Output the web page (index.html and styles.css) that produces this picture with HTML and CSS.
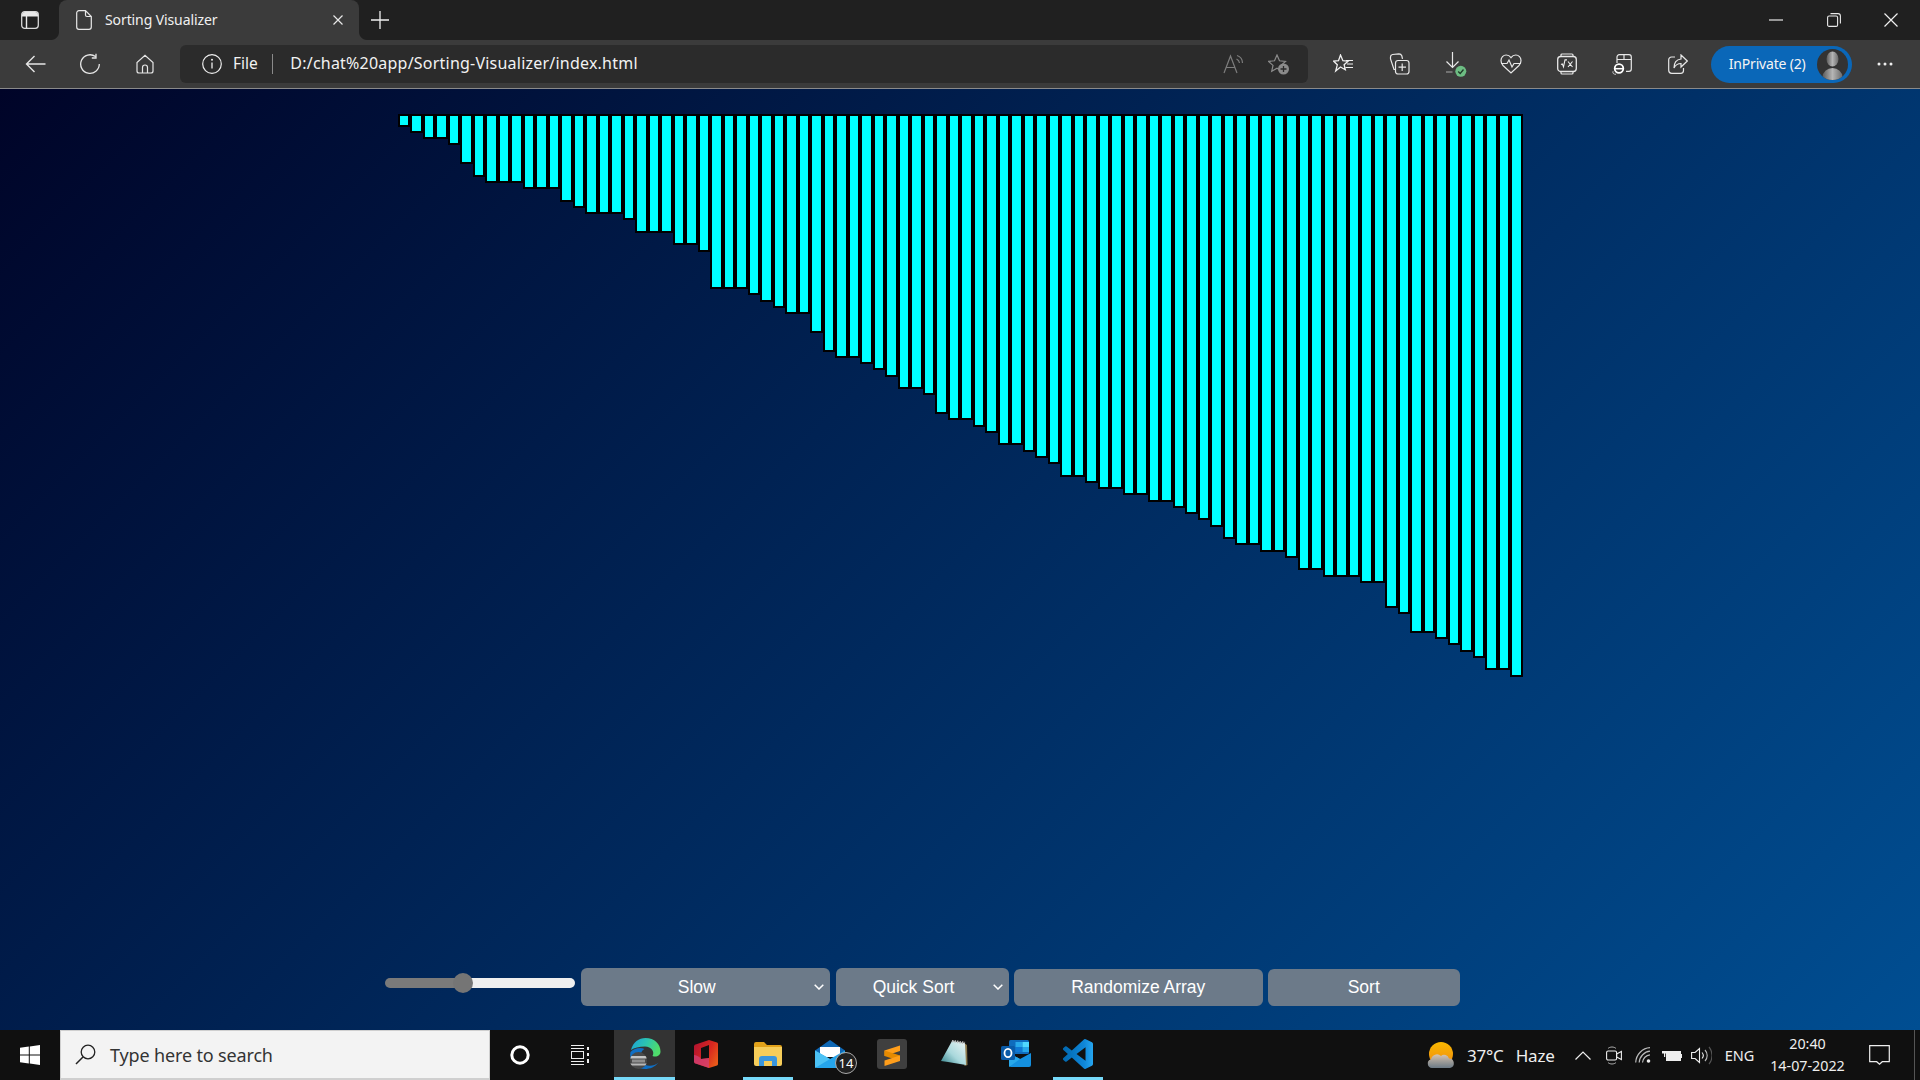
FILE: index.html
```html
<!DOCTYPE html>
<html lang="en">
<head>
<meta charset="utf-8">
<title>Sorting Visualizer</title>
<link rel="stylesheet" href="styles.css">
</head>
<body>
<div class="window">
  <header class="tabstrip">
    <div class="tab-actions">
      <svg class="ic" width="18" height="18" viewBox="0 0 18 18"><rect x=".7" y=".7" width="16.6" height="16.6" rx="3" fill="none" stroke="#d8d8d8" stroke-width="1.3"/><path d="M1 4a3 3 0 0 1 3-3h10a3 3 0 0 1 3 3v1.500H6.200V17H4.800V5.500H1z" fill="#e8e8e8"/></svg>
    </div>
    <div class="tab">
      <svg class="ic" width="16" height="20" viewBox="0 0 16 20"><path d="M3 .7h6.500L15.300 6.500V17a2.300 2.300 0 0 1-2.300 2.300H3A2.300 2.300 0 0 1 .7 17V3A2.300 2.300 0 0 1 3 .7zM9.500 .7V5a1.500 1.500 0 0 0 1.500 1.500h4.300" fill="none" stroke="#e8e8e8" stroke-width="1.200"/></svg>
      <span class="tab-title">Sorting Visualizer</span>
      <svg class="ic tab-close" width="12" height="12" viewBox="0 0 12 12"><path d="M1.500 1.500l9 9M10.500 1.500l-9 9" stroke="#e8e8e8" stroke-width="1.200"/></svg>
    </div>
    <div class="new-tab">
      <svg class="ic" width="18" height="18" viewBox="0 0 18 18"><path d="M9 0v18M0 9h18" stroke="#f0f0f0" stroke-width="1.300"/></svg>
    </div>
    <div class="win-controls">
      <div class="win-btn"><svg class="ic" width="14" height="2" viewBox="0 0 14 2"><path d="M0 1h14" stroke="#e8e8e8" stroke-width="1.200"/></svg></div>
      <div class="win-btn"><svg class="ic" width="14" height="14" viewBox="0 0 14 14"><rect x=".6" y="3" width="10" height="10.400" rx="1.500" fill="none" stroke="#e8e8e8" stroke-width="1.100"/><path d="M3.500 .6h7.500a2.400 2.400 0 0 1 2.400 2.400v7.500" fill="none" stroke="#e8e8e8" stroke-width="1.100"/></svg></div>
      <div class="win-btn"><svg class="ic" width="14" height="14" viewBox="0 0 14 14"><path d="M.5 .5l13 13M13.500 .5l-13 13" stroke="#f0f0f0" stroke-width="1.200"/></svg></div>
    </div>
  </header>

  <nav class="toolbar">
    <div class="nav-cell"><svg class="ic" width="21" height="18" viewBox="0 0 21 18"><path d="M20.500 9H1.500M9.500 1L1.500 9l8 8" fill="none" stroke="#e6e6e6" stroke-width="1.400"/></svg></div>
    <div class="nav-cell"><svg class="ic" width="22" height="22" viewBox="0 0 22 22"><path d="M16.500 3.600A9.300 9.300 0 1 0 20.300 11M17 .8v4.200h-4.200" fill="none" stroke="#e6e6e6" stroke-width="1.300"/></svg></div>
    <div class="nav-cell"><svg class="ic" width="20" height="20" viewBox="0 0 20 20"><path d="M7.500 19V13.500a2.500 2.500 0 0 1 5 0V19M4 19h12a2 2 0 0 0 2-2V8.500L10 1.200 2 8.500V17a2 2 0 0 0 2 2z" fill="none" stroke="#e6e6e6" stroke-width="1.200"/></svg></div>

    <div class="address">
      <svg class="ic" width="20" height="20" viewBox="0 0 20 20"><circle cx="10" cy="10" r="9.300" fill="none" stroke="#eee" stroke-width="1.200"/><path d="M10 8.500v6" stroke="#eee" stroke-width="1.300"/><circle cx="10" cy="5.800" r="1" fill="#eee"/></svg>
      <span class="addr-file">File</span>
      <span class="addr-sep"></span>
      <span class="addr-url">D:/chat%20app/Sorting-Visualizer/index.html</span>
      <div class="addr-icons">
        <div class="addr-cell"><svg class="ic" width="22" height="20" viewBox="0 0 22 20"><path d="M1 19L7.500 2 14 19M3.300 13.500h8.400" fill="none" stroke="#7d7d7d" stroke-width="1.200"/><path d="M14 1.500a8 8 0 0 1 5.500 7.500M13.500 5a5 5 0 0 1 3 4" fill="none" stroke="#7d7d7d" stroke-width="1.200"/></svg></div>
        <div class="addr-cell"><svg class="ic" width="22" height="21" viewBox="0 0 22 21"><path d="M9 1l2.500 5.800 6 .6-4.500 4 1.300 5.900L9 14.300l-5.300 3 1.300-5.900-4.500-4 6-.6z" fill="none" stroke="#8b8b8b" stroke-width="1.200"/><circle cx="15.500" cy="15" r="5.500" fill="#8b8b8b"/><path d="M15.500 12v6M12.500 15h6" stroke="#2b2b2b" stroke-width="1.300"/></svg></div>
      </div>
    </div>

    <div class="tool-icons">
      <div class="tool-cell"><svg class="ic" width="21" height="20" viewBox="0 0 21 20"><path d="M7.500 1l2.400 5.700 5.100.5-3.900 3.500 1.200 5-4.800-2.700-4.800 4 1.600-6.200L.7 7.200l4.800-.5z" fill="none" stroke="#f0f0f0" stroke-width="1.300"/><path d="M13 6.500h7M14 10h6M12.500 13.500h7.500" stroke="#f0f0f0" stroke-width="1.200"/></svg></div>
      <div class="tool-cell"><svg class="ic" width="21" height="22" viewBox="0 0 21 22"><path d="M6.500 16.500H5L1.500 6V4a2.500 2.500 0 0 1 2-2.500L10 .8c1.500 0 2.300.7 2.800 2l.7 3" fill="none" stroke="#e8e8e8" stroke-width="1.200"/><rect x="6.500" y="7.500" width="13.500" height="13.500" rx="2.500" fill="none" stroke="#e8e8e8" stroke-width="1.200"/><path d="M13.200 10.500v7.500M9.500 14.200H17" stroke="#e8e8e8" stroke-width="1.200"/></svg></div>
      <div class="tool-cell tool-download"><svg class="ic" width="23" height="25" viewBox="0 0 23 25"><path d="M7.500 0v15M1.500 9.500l6 6 6-6" fill="none" stroke="#e8e8e8" stroke-width="1.200"/><path d="M1 20h6.500" stroke="#999" stroke-width="1.200"/><circle cx="15.800" cy="19.300" r="5.500" fill="#6dbd83"/><path d="M13.200 19.500l2 2 3.300-4" fill="none" stroke="#1f3a28" stroke-width="1.300"/></svg></div>
      <div class="tool-cell"><svg class="ic" width="22" height="20" viewBox="0 0 22 20"><path d="M3 11.500C1.500 10 1 8.500 1 6.500 1 3.500 3.300 1 6.200 1 8 1 9.800 2 11 3.700 12.200 2 14 1 15.800 1 18.700 1 21 3.500 21 6.500c0 2-.5 3.500-2 5L11 19z" fill="none" stroke="#e8e8e8" stroke-width="1.200"/><path d="M1 9.500h6l2-3.500 3 7 2-3.500h7" fill="none" stroke="#e8e8e8" stroke-width="1.200"/></svg></div>
      <div class="tool-cell"><svg class="ic" width="20" height="22" viewBox="0 0 20 22"><rect x=".7" y="3.500" width="18.600" height="15" rx="3" fill="none" stroke="#e8e8e8" stroke-width="1.300"/><path d="M4 3.500V2a1 1 0 0 1 1-1h10a1 1 0 0 1 1 1v1.500M4 18.500V20a1 1 0 0 0 1 1h10a1 1 0 0 0 1-1v-1.500" fill="none" stroke="#e8e8e8" stroke-width="1.200"/><path d="M4 11.500l1.300-.6 1.200 3 1.500-7h2M11 8.500l4.500 5.500M15.500 8.500L11 14" fill="none" stroke="#f0f0f0" stroke-width="1.100"/></svg></div>
      <div class="tool-cell"><svg class="ic" width="20" height="21" viewBox="0 0 20 21"><path d="M5 9V3a2.300 2.300 0 0 1 2.300-2.300H17A2.300 2.300 0 0 1 19.300 3v12a2.300 2.300 0 0 1-2.300 2.300h-3M5.500 5.500h13.500M12 1v4.500" fill="none" stroke="#e8e8e8" stroke-width="1.200"/><circle cx="7" cy="14.500" r="4.300" fill="none" stroke="#fff" stroke-width="1.800"/><path d="M3 14.700h8" stroke="#fff" stroke-width="1.500"/><path d="M4 20.300c-2.500 0-3.500-1-3-3" fill="none" stroke="#ccc" stroke-width="1"/></svg></div>
      <div class="tool-cell"><svg class="ic" width="20" height="20" viewBox="0 0 20 20"><path d="M7 3H3.500A2.800 2.800 0 0 0 .7 5.800v10.500a3 3 0 0 0 3 3h9a2.800 2.800 0 0 0 2.800-2.800V14" fill="none" stroke="#e8e8e8" stroke-width="1.200"/><path d="M13 1l6.300 6L13 13V9.500C9.500 9.500 7.500 11 6 14c0-5 2.500-8.500 7-9z" fill="none" stroke="#e8e8e8" stroke-width="1.200"/></svg></div>
    </div>

    <div class="inprivate">
      <span class="inprivate-label">InPrivate (2)</span>
      <svg class="avatar" width="31" height="31" viewBox="0 0 31 31"><defs><linearGradient id="av" x1="0" x2="1"><stop offset="0" stop-color="#5a5a5a"/><stop offset=".5" stop-color="#b5b5b5"/><stop offset="1" stop-color="#6a6a6a"/></linearGradient><clipPath id="avc"><circle cx="15.500" cy="15.500" r="15.500"/></clipPath></defs><circle cx="15.500" cy="15.500" r="15.500" fill="#333"/><g clip-path="url(#avc)"><ellipse cx="15.500" cy="10" rx="6" ry="7.500" fill="url(#av)"/><ellipse cx="15.500" cy="28" rx="10" ry="9" fill="url(#av)"/></g></svg>
    </div>
    <div class="more"><svg class="ic" width="16" height="4" viewBox="0 0 16 4"><circle cx="2" cy="2" r="1.500" fill="#eee"/><circle cx="8" cy="2" r="1.500" fill="#eee"/><circle cx="14" cy="2" r="1.500" fill="#eee"/></svg></div>
  </nav>

  <main class="page">
    <div class="bars">
      <div class="bar" style="height:13px"></div><div class="bar" style="height:19px"></div><div class="bar" style="height:25px"></div><div class="bar" style="height:25px"></div><div class="bar" style="height:31px"></div><div class="bar" style="height:50px"></div><div class="bar" style="height:63px"></div><div class="bar" style="height:69px"></div><div class="bar" style="height:69px"></div><div class="bar" style="height:69px"></div>
      <div class="bar" style="height:75px"></div><div class="bar" style="height:75px"></div><div class="bar" style="height:75px"></div><div class="bar" style="height:88px"></div><div class="bar" style="height:94px"></div><div class="bar" style="height:100px"></div><div class="bar" style="height:100px"></div><div class="bar" style="height:100px"></div><div class="bar" style="height:106px"></div><div class="bar" style="height:119px"></div>
      <div class="bar" style="height:119px"></div><div class="bar" style="height:119px"></div><div class="bar" style="height:131px"></div><div class="bar" style="height:131px"></div><div class="bar" style="height:138px"></div><div class="bar" style="height:175px"></div><div class="bar" style="height:175px"></div><div class="bar" style="height:175px"></div><div class="bar" style="height:181px"></div><div class="bar" style="height:188px"></div>
      <div class="bar" style="height:194px"></div><div class="bar" style="height:200px"></div><div class="bar" style="height:200px"></div><div class="bar" style="height:219px"></div><div class="bar" style="height:238px"></div><div class="bar" style="height:244px"></div><div class="bar" style="height:244px"></div><div class="bar" style="height:250px"></div><div class="bar" style="height:256px"></div><div class="bar" style="height:263px"></div>
      <div class="bar" style="height:275px"></div><div class="bar" style="height:275px"></div><div class="bar" style="height:281px"></div><div class="bar" style="height:300px"></div><div class="bar" style="height:306px"></div><div class="bar" style="height:306px"></div><div class="bar" style="height:313px"></div><div class="bar" style="height:319px"></div><div class="bar" style="height:331px"></div><div class="bar" style="height:331px"></div>
      <div class="bar" style="height:338px"></div><div class="bar" style="height:344px"></div><div class="bar" style="height:350px"></div><div class="bar" style="height:363px"></div><div class="bar" style="height:363px"></div><div class="bar" style="height:369px"></div><div class="bar" style="height:375px"></div><div class="bar" style="height:375px"></div><div class="bar" style="height:381px"></div><div class="bar" style="height:381px"></div>
      <div class="bar" style="height:388px"></div><div class="bar" style="height:388px"></div><div class="bar" style="height:394px"></div><div class="bar" style="height:400px"></div><div class="bar" style="height:406px"></div><div class="bar" style="height:413px"></div><div class="bar" style="height:425px"></div><div class="bar" style="height:431px"></div><div class="bar" style="height:431px"></div><div class="bar" style="height:438px"></div>
      <div class="bar" style="height:438px"></div><div class="bar" style="height:444px"></div><div class="bar" style="height:456px"></div><div class="bar" style="height:456px"></div><div class="bar" style="height:463px"></div><div class="bar" style="height:463px"></div><div class="bar" style="height:463px"></div><div class="bar" style="height:469px"></div><div class="bar" style="height:469px"></div><div class="bar" style="height:494px"></div>
      <div class="bar" style="height:500px"></div><div class="bar" style="height:519px"></div><div class="bar" style="height:519px"></div><div class="bar" style="height:525px"></div><div class="bar" style="height:531px"></div><div class="bar" style="height:538px"></div><div class="bar" style="height:544px"></div><div class="bar" style="height:556px"></div><div class="bar" style="height:556px"></div><div class="bar" style="height:563px"></div>
    </div>
    <div class="controls">
      <input class="speed" type="range" min="0" max="100" value="40">
      <select class="ctl ctl-speed"><option>Slow</option><option>Medium</option><option>Fast</option></select>
      <select class="ctl ctl-algo"><option>Quick Sort</option><option>Merge Sort</option><option>Bubble Sort</option></select>
      <button class="ctl btn btn-random" type="button">Randomize Array</button>
      <button class="ctl btn btn-sort" type="button">Sort</button>
    </div>
  </main>

  <footer class="taskbar">
    <div class="start"><svg class="ic" width="20" height="20" viewBox="0 0 20 20"><path d="M0 2.800L8.800 1.500v8H0zM9.800 1.400L20 0v9.500H9.800zM0 10.500h8.800v8L0 17.200zM9.800 10.500H20V20L9.800 18.600z" fill="#fff"/></svg></div>
    <div class="search">
      <svg class="ic" width="21" height="21" viewBox="0 0 21 21"><circle cx="13" cy="8" r="6.800" fill="none" stroke="#222" stroke-width="1.300"/><path d="M8.200 12.800L1 20" stroke="#222" stroke-width="1.500"/></svg>
      <span class="search-text">Type here to search</span>
    </div>
    <div class="sys-cell"><svg class="ic" width="20" height="20" viewBox="0 0 20 20"><circle cx="10" cy="10" r="8.200" fill="none" stroke="#fff" stroke-width="3"/></svg></div>
    <div class="sys-cell"><svg class="ic" width="20" height="20" viewBox="0 0 20 20"><path d="M1 .5h13M1 3.500h13M1 16.500h13M1 19.500h13" stroke="#eee" stroke-width="1"/><rect x="1.500" y="6.500" width="12" height="7" fill="none" stroke="#eee" stroke-width="1"/><path d="M18 2v3M18 8v3M18 14v4" stroke="#eee" stroke-width="2"/></svg></div>

    <div class="app app-active">
      <svg class="ic" width="32" height="31" viewBox="0 0 32 31"><defs><linearGradient id="eg" x1="0" x2="1" y1="0" y2=".3"><stop offset="0" stop-color="#1aa0dc"/><stop offset=".55" stop-color="#2cc4b0"/><stop offset="1" stop-color="#4fdc6b"/></linearGradient><clipPath id="ec"><circle cx="9.500" cy="22.500" r="8.500"/></clipPath></defs><path d="M2 12C4 4 10 0 16.500 0 25.500 0 31.500 6 31.500 13.500c0 4.500-4.500 6-8 4.500 2.500-4-1-9.500-7.500-9.500C10 8.500 5 10 2 12z" fill="url(#eg)"/><path d="M1.500 14C5 10 12 9 15.500 11c-4 2-5.500 8-3 13 3.500 5 12 5 17 .5C26 29 21 31 16 31 7 31-.5 23 1.500 14z" fill="#0f6fc5"/><circle cx="9.500" cy="22.500" r="8.500" fill="#4a4a4a"/><g clip-path="url(#ec)"><rect x="1" y="18" width="17" height="2.500" fill="#c4c4c4"/><rect x="3" y="21.500" width="13" height="3" fill="#8e8e8e"/><rect x="1" y="25.500" width="17" height="2" fill="#b8b8b8"/></g></svg>
    </div>
    <div class="app">
      <svg class="ic" width="24" height="28" viewBox="0 0 24 28"><defs><linearGradient id="of" x1="0" x2="1" y1=".1" y2=".7"><stop offset="0" stop-color="#b01231"/><stop offset=".6" stop-color="#d8281f"/><stop offset="1" stop-color="#e8591a"/></linearGradient></defs><path fill-rule="evenodd" d="M15 0l8 2.600c.7.200 1 .7 1 1.400v20c0 .7-.3 1.200-1 1.400L15 28 .8 23.200 0 22V6l.8-1.200zM15 5L7 8v11l8-1z" fill="url(#of)"/><path d="M0 22V15c2 0 5 1 7 4l8-1v10L.8 23.200z" fill="#d0427a" opacity=".75"/></svg>
    </div>
    <div class="app app-open">
      <svg class="ic" width="28" height="24" viewBox="0 0 28 24"><path d="M0 2a2 2 0 0 1 2-2h8l3 3h13a2 2 0 0 1 2 2v2H0z" fill="#e2a21a"/><path d="M0 5h28v17a2 2 0 0 1-2 2H2a2 2 0 0 1-2-2z" fill="#f6cd5a"/><path d="M5 24v-7a3 3 0 0 1 3-3h12a3 3 0 0 1 3 3v7h-5v-5h-8v5z" fill="#3a96dd"/></svg>
    </div>
    <div class="app">
      <div class="mail-wrap">
        <svg class="ic" width="30" height="28" viewBox="0 0 30 28"><path d="M0 10.500L15 0l15 10.500V14H0z" fill="#0f68b5"/><path d="M5 7h20v10H5z" fill="#fff"/><path d="M0 10.500L15 19l15-8.500V26a2 2 0 0 1-2 2H2a2 2 0 0 1-2-2z" fill="#25a5ec"/><path d="M0 10.500L15 19 0 28z" fill="#4cc2f5"/></svg>
        <span class="mail-badge">14</span>
      </div>
    </div>
    <div class="app">
      <svg class="ic" width="30" height="30" viewBox="0 0 30 30"><rect width="30" height="30" rx="3" fill="#3f3f3f"/><path d="M23 6.500v5.500L7.500 17v-5.500z" fill="#ff9e1b"/><path d="M7.500 11.500L23 16.500V22L7.500 17z" fill="#e68a00"/><path d="M23 16.500V22L7.500 27v-5.500z" fill="#ff9e1b"/></svg>
    </div>
    <div class="app">
      <svg class="ic" width="28" height="27" viewBox="0 0 28 27"><defs><linearGradient id="np" x1="0" x2="1" y1="1" y2="0"><stop offset="0" stop-color="#2f7f88"/><stop offset=".45" stop-color="#a9d8dc"/><stop offset="1" stop-color="#eef6f6"/></linearGradient></defs><path d="M24 3l3 2 .5 20-3 1z" fill="#8d7a4e"/><path d="M12 1L25 3l1 22-18-3-7-1z" fill="url(#np)"/><path d="M12 1l13 2" stroke="#bdbdbd" stroke-width="2.500" stroke-dasharray="1.500 1"/></svg>
    </div>
    <div class="app">
      <svg class="ic" width="30" height="27" viewBox="0 0 30 27"><rect x="8" y="0" width="20" height="14" rx="1.500" fill="#0f6cbd"/><rect x="14.500" y="2" width="7" height="5" fill="#28a8ea"/><rect x="21.500" y="2" width="6.500" height="5" fill="#50d9ff"/><rect x="14.500" y="7" width="7" height="5" fill="#0f78d4"/><rect x="21.500" y="7" width="6.500" height="5" fill="#28a8ea"/><path d="M8 13l11 6 11-6v12a2 2 0 0 1-2 2H10a2 2 0 0 1-2-2z" fill="#1490df"/><path d="M8 13l11 6-11 8z" fill="#28a8ea"/><rect x="0" y="6" width="14" height="14" rx="1.500" fill="#0a5ba8"/><ellipse cx="7" cy="13" rx="3.500" ry="4.200" fill="none" stroke="#fff" stroke-width="1.800"/></svg>
    </div>
    <div class="app app-open">
      <svg class="ic" width="30" height="30" viewBox="0 0 24 24"><defs><linearGradient id="vs" x1="0" x2="1"><stop offset="0" stop-color="#0068b0"/><stop offset=".7" stop-color="#0f86d8"/><stop offset="1" stop-color="#26a6f0"/></linearGradient></defs><path fill="url(#vs)" d="M23.150 2.587L18.210.21a1.494 1.494 0 0 0-1.705.29l-9.460 8.630-4.120-3.128a.999.999 0 0 0-1.276.057L.327 7.261A1 1 0 0 0 .326 8.740L3.899 12 .326 15.260a1 1 0 0 0 .001 1.479L1.650 17.940a.999.999 0 0 0 1.276.057l4.120-3.128 9.460 8.630a1.492 1.492 0 0 0 1.704.290l4.942-2.377A1.500 1.500 0 0 0 24 20.060V3.939a1.500 1.500 0 0 0-.850-1.352zm-5.146 14.861L10.826 12l7.178-5.448v10.896z"/></svg>
    </div>

    <div class="tray">
      <div class="weather">
        <svg class="ic" width="28" height="26" viewBox="0 0 28 26"><defs><linearGradient id="sun" x1="0" x2="0" y1="0" y2="1"><stop offset="0" stop-color="#f9b800"/><stop offset="1" stop-color="#f08a10"/></linearGradient><linearGradient id="cl" x1="0" x2="0" y1="0" y2="1"><stop offset="0" stop-color="#d8c4ae"/><stop offset="1" stop-color="#6c7a86"/></linearGradient></defs><circle cx="14" cy="12" r="12" fill="url(#sun)"/><path d="M5 26a4.500 4.500 0 0 1-1-8.800A6 6 0 0 1 14 14a5 5 0 0 1 8 2.500A4.800 4.800 0 0 1 23 26z" fill="url(#cl)"/></svg>
        <span class="temp">37°C</span>
        <span class="temp">Haze</span>
      </div>
      <div class="tray-cell tray-chevron"><svg class="ic" width="16" height="9" viewBox="0 0 16 9"><path d="M.5 8.500L8 1l7.500 7.500" fill="none" stroke="#eee" stroke-width="1.200"/></svg></div>
      <div class="tray-cell tray-meet"><svg class="ic" width="16" height="19" viewBox="0 0 16 19"><rect x=".6" y="5" width="10" height="9" rx="1.500" fill="none" stroke="#eee" stroke-width="1.100"/><path d="M10.600 8l4.800-2.500v8L10.600 11z" fill="none" stroke="#eee" stroke-width="1.100"/><path d="M2 2.500C4 .5 8 .5 10 2.500M2 16.500c2 2 6 2 8 0" fill="none" stroke="#aaa" stroke-width="1"/></svg></div>
      <div class="tray-cell tray-wifi"><svg class="ic" width="16" height="16" viewBox="0 0 16 16"><path d="M.7 15.500C1 7.500 7.500 1 15 .7M4.200 15.500C4.500 9.500 9.500 4.500 15 4.200M7.500 15.500C7.800 11.500 11 8 15 7.800" fill="none" stroke="#bbb" stroke-width="1.200"/><circle cx="13.500" cy="14" r="1.800" fill="#eee"/></svg></div>
      <div class="tray-cell tray-battery"><svg class="ic" width="20" height="14" viewBox="0 0 20 14"><rect x="4.500" y="3.500" width="14" height="9" fill="#eee" stroke="#eee"/><rect x="18.800" y="6" width="1.200" height="4" fill="#eee"/><path d="M1 0v3M4 0v3M0 3h5v2.500H3.200V9H2V5.500H0z" fill="#eee"/></svg></div>
      <div class="tray-cell tray-volume"><svg class="ic" width="21" height="19" viewBox="0 0 21 19"><path d="M.6 6.500h3.500L8.500 2.500v14L4.100 12.500H.6z" fill="none" stroke="#eee" stroke-width="1.100"/><path d="M11 6.500a4.500 4.500 0 0 1 0 6" fill="none" stroke="#eee" stroke-width="1.100"/><path d="M14 4a8 8 0 0 1 0 11" fill="none" stroke="#bbb" stroke-width="1.100"/><path d="M18 .8a14 14 0 0 1 0 17.400" fill="none" stroke="#555" stroke-width="1.100"/></svg></div>
      <div class="tray-lang">ENG</div>
      <div class="clock"><span>20:40</span><span>14-07-2022</span></div>
      <div class="tray-cell tray-notify"><svg class="ic" width="21" height="20" viewBox="0 0 21 20"><path d="M.7 .7h19.600v16h-7l-2.800 2.500-2.800-2.500h-7z" fill="none" stroke="#eee" stroke-width="1.200"/></svg></div>
      <div class="peek"></div>
    </div>
  </footer>
</div>
</body>
</html>
```

FILE: styles.css
```css
* { box-sizing: border-box; }
html, body { margin: 0; height: 100%; }
body { font-family: "Noto Sans", "Open Sans", sans-serif; overflow: hidden; background: #000; }

.ic { display: block; flex: none; }

.window { width: 1920px; height: 1080px; display: flex; flex-direction: column; }

/* tab strip */
.tabstrip { height: 40px; background: #202020; display: flex; flex: none; }
.tab-actions { width: 59px; display: flex; align-items: center; justify-content: center; }
.tab { position: relative; width: 300px; display: flex; align-items: center; padding: 0 15px 0 17px; background: #3b3b3b; border-radius: 8px 8px 0 0; }
.tab::before, .tab::after { content: ""; position: absolute; bottom: 0; width: 8px; height: 8px; }
.tab::before { left: -8px; background: radial-gradient(circle at 0 0, #202020 7.5px, #3b3b3b 8.5px); }
.tab::after { right: -8px; background: radial-gradient(circle at 100% 0, #202020 7.5px, #3b3b3b 8.500px); }
.tab-title { margin-left: 13px; padding-bottom: 2px; font-size: 14px; color: #f0f0f0; flex: 1; letter-spacing: -.1px; }
.new-tab { width: 44px; margin-left: -1px; display: flex; align-items: center; justify-content: center; }
.win-controls { margin-left: auto; display: flex; height: 40px; padding-right: 0; }
.win-btn { width: 57.500px; display: flex; align-items: center; justify-content: center; }

/* toolbar */
.toolbar { height: 49px; background: #3b3b3b; border-bottom: 1px solid #8a8a8a; display: flex; align-items: center; padding-left: 7.500px; flex: none; }
.nav-cell { width: 55px; height: 48px; display: flex; align-items: center; justify-content: center; }
.address { width: 1128px; height: 38px; margin-left: 7.500px; background: #2b2b2b; border-radius: 6px; display: flex; align-items: center; padding: 0 6.500px 0 22px; }
.addr-file { margin-left: 11px; padding-bottom: 2px; font-size: 15.500px; color: #f2f2f2; }
.addr-sep { width: 1.500px; height: 20px; background: #8a8a8a; margin-left: 14px; }
.addr-url { margin-left: 17px; padding-bottom: 2px; font-size: 16px; color: #f2f2f2; letter-spacing: .22px; }
.addr-icons { margin-left: auto; display: flex; }
.addr-cell { width: 45px; height: 38px; display: flex; align-items: center; justify-content: center; }
.tool-icons { display: flex; margin-left: 8px; }
.tool-cell { width: 55.700px; height: 48px; display: flex; align-items: center; justify-content: center; }
.tool-download { padding-left: 3px; }
.inprivate { width: 141px; height: 37px; margin-left: 5px; border-radius: 19px; background: #0a67b8; display: flex; align-items: center; padding: 0 4px 0 18px; }
.inprivate-label { font-size: 14px; padding-bottom: 1px; color: #f4f4f4; flex: 1; letter-spacing: -.2px; }
.avatar { display: block; flex: none; }
.more { width: 66px; display: flex; align-items: center; justify-content: center; }

/* page */
.page { flex: 1; min-height: 0; display: flex; flex-direction: column; justify-content: space-between; padding: 25px 0 24px; background: linear-gradient(135deg, #000428, #004e92); }
.bars { width: 1125px; margin: 0 auto; display: flex; align-items: flex-start; }
.bar { width: 12.500px; background: #0ff; border: 2px solid #000; flex: none; }
.controls { display: flex; align-items: flex-end; gap: 5.500px; padding-left: 385px; }
.speed { appearance: none; -webkit-appearance: none; width: 190px; height: 10px; margin: 0 0 18px; border-radius: 5px; background: linear-gradient(to right, #7a7a7a 41%, #efefef 41%); outline: none; }
.speed::-webkit-slider-thumb { -webkit-appearance: none; width: 20px; height: 20px; border-radius: 50%; background: #757575; border: none; }
.ctl { font-family: "Liberation Sans", Arial, sans-serif; font-size: 17.500px; color: #fff; background-color: #6c7a89; border: none; border-radius: 6px; text-align: center; padding: 0; }
select.ctl { height: 38px; appearance: none; -webkit-appearance: none; padding-right: 17px; background-image: url("data:image/svg+xml,%3Csvg xmlns='http://www.w3.org/2000/svg' width='10' height='6' viewBox='0 0 10 6'%3E%3Cpath d='M.7 .7L5 5l4.300-4.300' fill='none' stroke='%23fff' stroke-width='1.500'/%3E%3C/svg%3E"); background-repeat: no-repeat; background-position: right 6px center; }
.ctl-speed { width: 249.500px; }
.ctl-algo { width: 173px; }
.btn { height: 37px; }
.btn-random { width: 248.500px; }
.btn-sort { width: 191.500px; }

/* taskbar */
.taskbar { height: 50px; background: #101010; display: flex; flex: none; }
.start { width: 60px; display: flex; align-items: center; justify-content: center; }
.search { width: 430px; background: #f3f3f3; border: 1px solid #cfcfcf; border-bottom-width: 2px; display: flex; align-items: center; padding-left: 14px; }
.search-text { margin-left: 14px; font-size: 18px; color: #333; letter-spacing: -.15px; }
.sys-cell { width: 60px; display: flex; align-items: center; justify-content: center; }
.app { position: relative; width: 62px; display: flex; align-items: center; justify-content: center; padding-bottom: 3px; }
.app-active { background: #333; width: 61px; margin-left: 4px; }
.app-active::after, .app-open::after { content: ""; position: absolute; bottom: 0; height: 3px; background: #76d9f9; left: 6px; right: 6px; }
.app-active::after { left: 0; right: 0; }
.mail-wrap { position: relative; }
.mail-badge { position: absolute; right: -12px; bottom: -6px; width: 22px; height: 22px; border-radius: 50%; background: #202020; border: 1px solid #aaa; color: #fff; font-size: 13px; line-height: 20px; text-align: center; }
.tray { margin-left: auto; display: flex; align-items: center; height: 50px; color: #eee; }
.weather { width: 145px; display: flex; align-items: center; padding-left: 7px; }
.temp { font-size: 17px; margin-left: 12px; letter-spacing: -.2px; color: #eee; }
.tray-cell { display: flex; align-items: center; justify-content: center; height: 50px; }
.tray-chevron { width: 35px; }
.tray-meet { width: 28px; }
.tray-wifi { width: 29px; }
.tray-battery { width: 30px; }
.tray-volume { width: 29px; }
.tray-lang { width: 47px; text-align: center; font-size: 14.500px; color: #eee; }
.clock { width: 89px; display: flex; flex-direction: column; align-items: center; font-size: 14.300px; line-height: 22px; color: #eee; }
.tray-notify { width: 54px; }
.peek { width: 6px; height: 50px; margin-left: 8px; border-left: 1px solid #555; }
```
